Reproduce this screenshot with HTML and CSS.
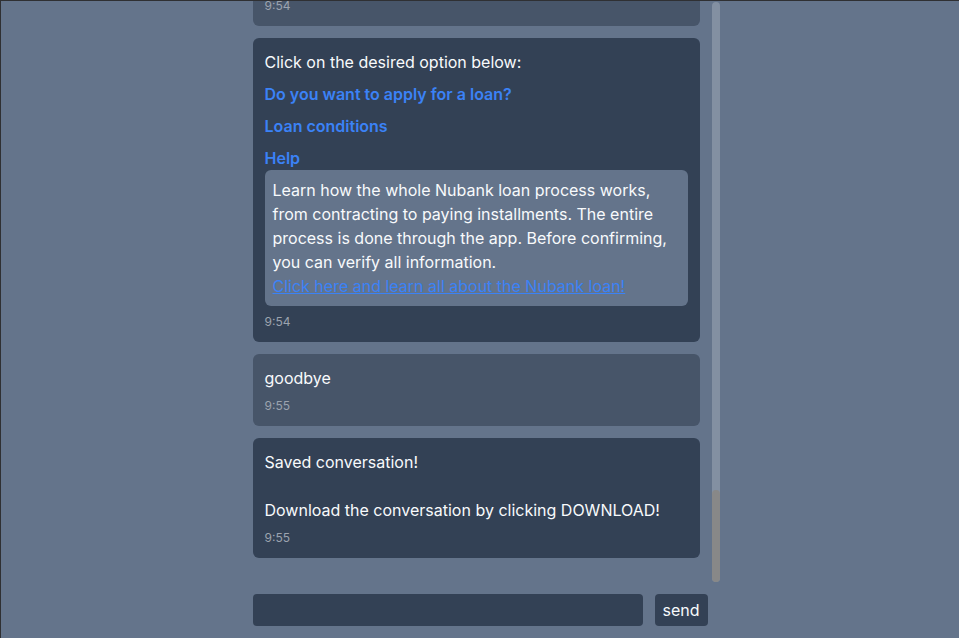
FILE: index.html
```html
<!DOCTYPE html>
<html lang="en">
<head>
<meta charset="utf-8">
<title>Nubank assistant</title>
<link rel="stylesheet" href="styles.css">
</head>
<body>
<div class="app">
  <div class="chat">
    <div class="scroll">
      <div class="list">
        <div class="msg bot">
          <p>Hello! Welcome to the Nubank virtual assistant. Type a message to get started.</p>
          <div class="time">9:50</div>
        </div>
        <div class="msg user">
          <p>hi</p>
          <div class="time">9:50</div>
        </div>
        <div class="msg bot">
          <p>Click on the desired option below:</p>
          <a class="opt" href="#">Do you want to apply for a loan?</a>
          <a class="opt" href="#">Loan conditions</a>
          <a class="opt" href="#">Help</a>
          <div class="time">9:50</div>
        </div>
        <div class="msg user">
          <p>Do you want to apply for a loan?</p>
          <div class="time">9:51</div>
        </div>
        <div class="msg bot">
          <p>Click on the desired option below:</p>
          <a class="opt" href="#">Do you want to apply for a loan?</a>
          <div class="box">
            <p>To apply for a loan, open the Nubank app, tap on Loan on the home screen and follow the steps. You will see the available amount, the interest rate and the number of installments before confirming.</p>
            <a class="inline" href="#">Click here to apply for your loan!</a>
          </div>
          <a class="opt" href="#">Loan conditions</a>
          <a class="opt" href="#">Help</a>
          <div class="time">9:51</div>
        </div>
        <div class="msg user">
          <p>Loan conditions</p>
          <div class="time">9:52</div>
        </div>
        <div class="msg bot">
          <p>Click on the desired option below:</p>
          <a class="opt" href="#">Do you want to apply for a loan?</a>
          <a class="opt" href="#">Loan conditions</a>
          <div class="box">
            <p>The conditions of the loan are personalized for each customer. You can choose the amount, the number of installments and the due date of the first payment, all directly in the app.</p>
            <a class="inline" href="#">Click here to see the loan conditions!</a>
          </div>
          <a class="opt" href="#">Help</a>
          <div class="time">9:52</div>
        </div>
        <div class="msg user">
          <p>menu</p>
          <div class="time">9:53</div>
        </div>
        <div class="msg bot">
          <p>Click on the desired option below:</p>
          <a class="opt" href="#">Do you want to apply for a loan?</a>
          <a class="opt" href="#">Loan conditions</a>
          <a class="opt" href="#">Help</a>
          <div class="time">9:53</div>
        </div>
        <div class="msg user">
          <p>Help</p>
          <div class="time">9:54</div>
        </div>
        <div class="msg bot">
          <p>Click on the desired option below:</p>
          <a class="opt" href="#">Do you want to apply for a loan?</a>
          <a class="opt" href="#">Loan conditions</a>
          <a class="opt" href="#">Help</a>
          <div class="box">
            <p>Learn how the whole Nubank loan process works, from contracting to paying installments. The entire process is done through the app. Before confirming, you can verify all information.</p>
            <a class="inline" href="#">Click here and learn all about the Nubank loan!</a>
          </div>
          <div class="time">9:54</div>
        </div>
        <div class="msg user">
          <p>goodbye</p>
          <div class="time">9:55</div>
        </div>
        <div class="msg bot">
          <p>Saved conversation!<br><br>Download the conversation by clicking DOWNLOAD!</p>
          <div class="time">9:55</div>
        </div>
      </div>
    </div>
    <div class="track" aria-hidden="true">
      <div class="thumb"></div>
    </div>
  </div>
  <form class="composer" onsubmit="return false">
    <input class="field" type="text" aria-label="Message">
    <button class="send" type="submit">send</button>
  </form>
</div>
</body>
</html>
```

FILE: styles.css
```css
* { box-sizing: border-box; }

html, body { height: 100%; }

body {
  margin: 0;
  background: #64748b;
  border-top: 1px solid #2f3033;
  border-left: 1px solid #2f3033;
  font-family: Inter, "Liberation Sans", sans-serif;
  font-size: 16px;
  line-height: 24px;
  color: #f8fafc;
}

.app {
  width: 455px;
  height: 100%;
  margin: 0 auto;
  display: flex;
  flex-direction: column;
}

.chat {
  flex: 1;
  min-height: 0;
  display: flex;
  gap: 12px;
  margin-right: -12px;
}

.scroll {
  width: 447px;
  overflow-y: auto;
  scrollbar-width: none;
  display: flex;
  flex-direction: column-reverse;
}

.scroll::-webkit-scrollbar { display: none; }

.track {
  width: 8px;
  margin: 1px 0 0;
  background: #8390a2;
  border-radius: 4px;
  display: flex;
  flex-direction: column;
  justify-content: flex-end;
}

.thumb {
  height: 92px;
  background: #888888;
  border-radius: 4px;
}

.list {
  padding-bottom: 12px;
}

.msg {
  padding: 12px;
  border-radius: 6px;
  margin-bottom: 12px;
}

.msg p { margin: 0; }

.bot { background: #334155; }
.user { background: #475569; }

.opt {
  display: block;
  margin-top: 8px;
  color: #3b82f6;
  font-weight: 600;
  text-decoration: none;
}

.box {
  background: #64748b;
  border-radius: 6px;
  padding: 8px;
}

.inline {
  color: #3b82f6;
  text-decoration: underline;
}

.time {
  margin-top: 8px;
  font-size: 12px;
  line-height: 16px;
  color: #9ca3af;
}

.composer {
  display: flex;
  gap: 12px;
  margin: 12px 0;
  height: 32px;
}

.field {
  flex: 1;
  min-width: 0;
  border: none;
  border-radius: 4px;
  background: #334155;
  color: #f8fafc;
  font: inherit;
  padding: 0 8px;
  outline: none;
}

.send {
  flex: 0 0 53px;
  border: none;
  border-radius: 4px;
  background: #334155;
  color: #f8fafc;
  font: inherit;
  padding: 0;
  cursor: pointer;
}
```
